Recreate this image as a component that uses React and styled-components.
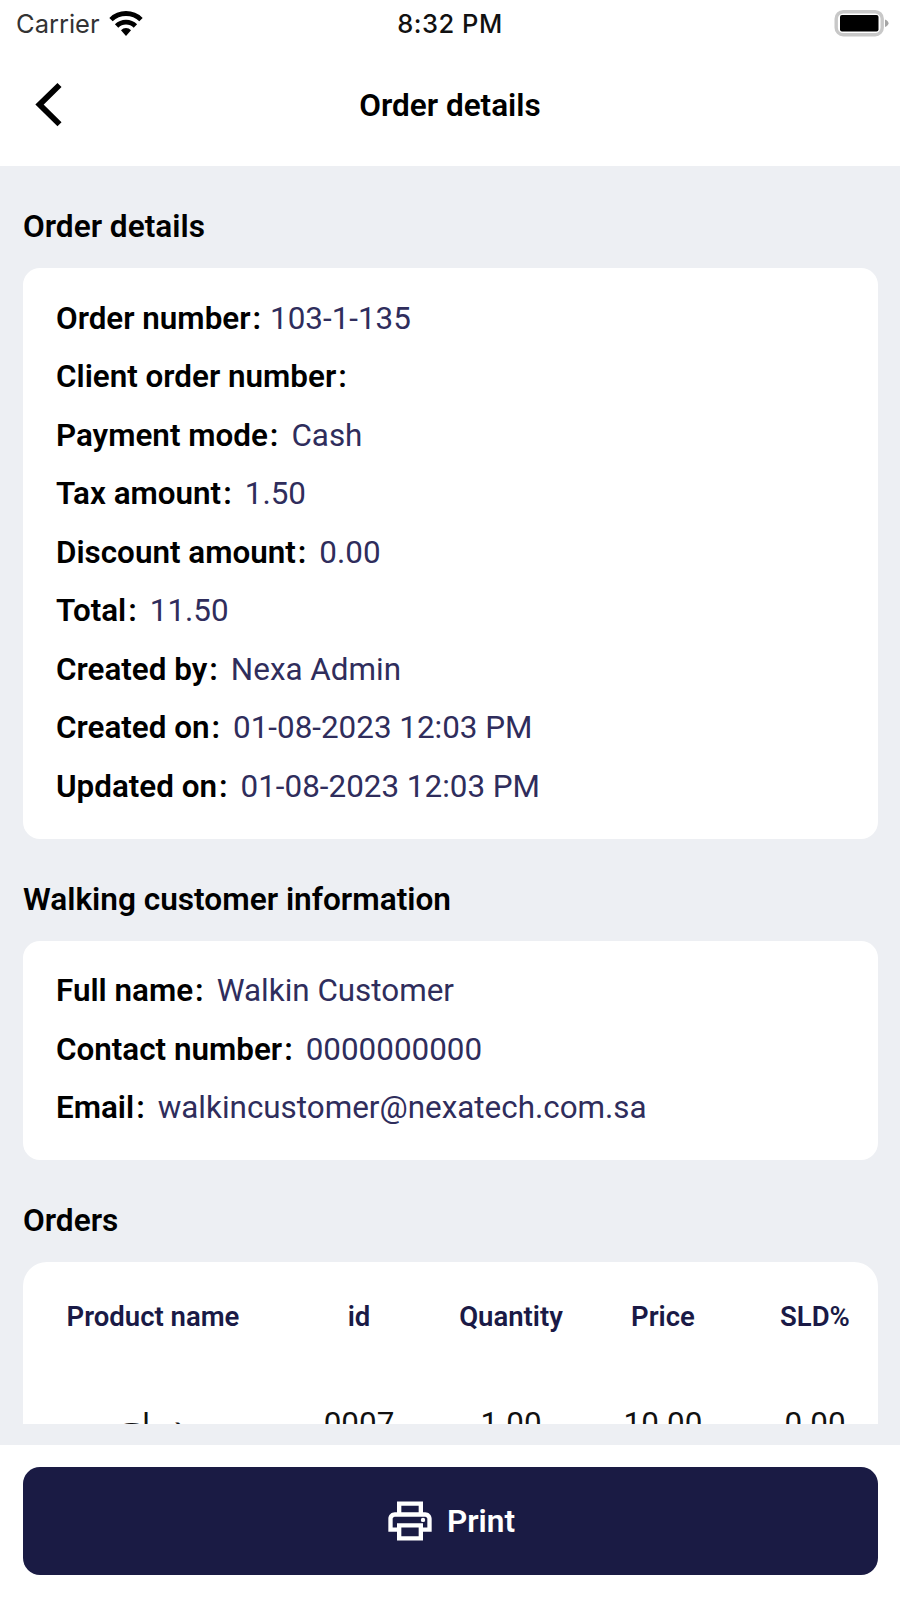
import React from "react";
import styled, { createGlobalStyle } from "styled-components";
import { MdOutlinePrint } from "react-icons/md";

const orderDetails = [
  { label: "Order number", value: "103-1-135", gap: 9 },
  { label: "Client order number", value: "" },
  { label: "Payment mode", value: "Cash" },
  { label: "Tax amount", value: "1.50" },
  { label: "Discount amount", value: "0.00" },
  { label: "Total", value: "11.50" },
  { label: "Created by", value: "Nexa Admin" },
  { label: "Created on", value: "01-08-2023 12:03 PM" },
  { label: "Updated on", value: "01-08-2023 12:03 PM" },
];

const customer = [
  { label: "Full name", value: "Walkin Customer" },
  { label: "Contact number", value: "0000000000" },
  { label: "Email", value: "walkincustomer@nexatech.com.sa" },
];

const columns = ["Product name", "id", "Quantity", "Price", "SLD%"];
const product = ["0007", "1.00", "10.00", "0.00"];

function StatusBar() {
  return (
    <Status>
      <Carrier>
        Carrier
        <svg width="34" height="26" viewBox="0 0 34 26">
          <g fill="none" stroke="#000" strokeWidth="4.8">
            <path d="M2 8.6 A21.5 21.5 0 0 1 32 8.6" />
            <path d="M7.6 15 A13.3 13.3 0 0 1 26.4 15" />
          </g>
          <path d="M12 19.2 A6.8 6.8 0 0 1 22 19.2 L17 25 Z" />
        </svg>
      </Carrier>
      <Time>8:32 PM</Time>
      <Battery>
        <svg width="56" height="28" viewBox="0 0 56 28">
          <rect x="2.2" y="1.7" width="46" height="23" rx="7" fill="#fff" stroke="#c8c8c8" strokeWidth="3.4" />
          <rect x="6" y="5" width="38.5" height="16.5" rx="2" />
          <path d="M51 9.5 Q54.5 11 54.5 13.2 Q54.5 15.5 51 17 Z" fill="#a5a5a5" />
        </svg>
      </Battery>
    </Status>
  );
}

function Details({ rows }) {
  return (
    <Card>
      {rows.map((row) => (
        <Row key={row.label} $gap={row.gap}>
          <Label>
            {row.label}
            <Colon>:</Colon>
          </Label>
          <Value>{row.value}</Value>
        </Row>
      ))}
    </Card>
  );
}

function App() {
  return (
    <Screen>
      <GlobalStyle />
      <StatusBar />
      <Header>
        <BackButton aria-label="Back">
          <svg width="28" height="46" viewBox="0 0 28 46">
            <path d="M24.5 3 L4.5 22.6 L24.5 42.2" fill="none" stroke="#000" strokeWidth="5.8" />
          </svg>
        </BackButton>
        <Title>Order details</Title>
      </Header>
      <Content>
        <Heading>Order details</Heading>
        <Details rows={orderDetails} />
        <Heading>Walking customer information</Heading>
        <Details rows={customer} />
        <Heading>Orders</Heading>
        <TableCard>
          <TableRow>
            {columns.map((name) => (
              <HeadCell key={name}>{name}</HeadCell>
            ))}
          </TableRow>
          <TableRow>
            <NameCell lang="ar">دجاج</NameCell>
            {product.map((text) => (
              <Cell key={text}>{text}</Cell>
            ))}
          </TableRow>
        </TableCard>
      </Content>
      <Footer>
        <PrintButton>
          <MdOutlinePrint size={52} />
          <span>Print</span>
        </PrintButton>
      </Footer>
    </Screen>
  );
}

export default App;

const GlobalStyle = createGlobalStyle`
  * {
    box-sizing: border-box;
  }
  body {
    margin: 0;
    background: #fff;
    font-family: Roboto, "DejaVu Sans", sans-serif;
  }
`;

const Screen = styled.div`
  width: 900px;
  height: 1598px;
  display: flex;
  flex-direction: column;
  overflow: hidden;
  background: #fff;
`;

const Status = styled.div`
  height: 48px;
  display: grid;
  grid-template-columns: 1fr auto 1fr;
  align-items: center;
  padding: 0 10px 1px 16px;
  font-family: Inter, sans-serif;
  font-size: 25.5px;
`;

const Carrier = styled.div`
  display: flex;
  align-items: center;
  gap: 9px;
  color: #333;
`;

const Time = styled.div`
  margin-right: 6px;
  font-weight: 500;
  letter-spacing: 0.5px;
  color: #111;
`;

const Battery = styled.div`
  display: flex;
  justify-content: flex-end;
`;

const Header = styled.header`
  height: 118px;
  flex: none;
  display: grid;
  grid-template-columns: 1fr auto 1fr;
  align-items: center;
  padding: 0 35px 4px;
`;

const BackButton = styled.button`
  display: flex;
  width: 28px;
  padding: 0;
  border: none;
  background: none;
`;

const Title = styled.h1`
  margin: 0;
  font-size: 31.5px;
  font-weight: 600;
`;

const Content = styled.main`
  height: 1279px;
  flex: none;
  padding: 0 22px 0 23px;
  border-bottom: 21px solid #edeff3;
  background: #edeff3;
  overflow: hidden;
`;

const Heading = styled.h2`
  height: 102px;
  margin: 0;
  padding-top: 20px;
  line-height: 82px;
  font-size: 31.6px;
  font-weight: 600;
`;

const Card = styled.section`
  padding: 21px 33px 23.2px;
  border-radius: 17px;
  background: #fff;
`;

const Row = styled.div`
  height: 58.5px;
  display: flex;
  align-items: center;
  gap: ${(props) => props.$gap || 13}px;
  font-size: 31.4px;
`;

const Label = styled.span`
  font-weight: 600;
`;

const Colon = styled.span`
  margin-left: 2px;
`;

const Value = styled.span`
  color: #2f2d5c;
`;

const TableCard = styled(Card)`
  height: 300px;
  padding: 0;
  border-radius: 24px;
`;

const TableRow = styled.div`
  height: 107px;
  display: grid;
  grid-template-columns: 260px 152px 152px 152px 152px;
`;

const HeadCell = styled.div`
  line-height: 109px;
  text-align: center;
  font-size: 27.5px;
  font-weight: 600;
  color: #1a1a46;
`;

const Cell = styled.div`
  line-height: 110px;
  text-align: center;
  font-size: 31.4px;
  color: #111;
`;

const NameCell = styled(Cell)`
  padding-top: 2px;
  font-size: 31px;
`;

const Footer = styled.footer`
  flex: 1;
  padding: 22px 22px 22px 23px;
`;

const PrintButton = styled.button`
  width: 100%;
  height: 108px;
  display: flex;
  align-items: center;
  justify-content: center;
  gap: 11px;
  padding: 0 2px 0 0;
  border: none;
  border-radius: 17px;
  background: #1a1b44;
  color: #fff;
  font-family: inherit;
  font-size: 31.6px;
  font-weight: 600;
`;
